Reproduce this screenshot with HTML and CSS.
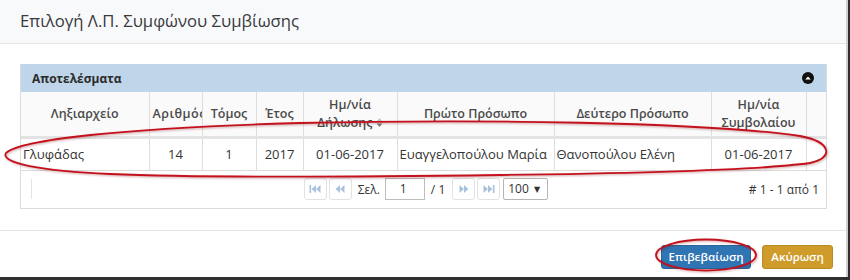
FILE: index.html
```html
<!DOCTYPE html>
<html lang="el">
<head>
    <meta charset="UTF-8">
    <title>Επιλογή Λ.Π. Συμφώνου Συμβίωσης</title>
    <link rel="stylesheet" href="styles.css">
</head>
<body>
    <div class="modal">
        <div class="modal-header">
            <h4>Επιλογή Λ.Π. Συμφώνου Συμβίωσης</h4>
        </div>

        <div class="modal-body">
            <div class="panel">
                <div class="panel-heading">
                    <span>Αποτελέσματα</span>
                    <span class="collapse-btn">
                        <svg viewBox="0 0 12 12" width="12" height="12">
                            <circle cx="6" cy="6" r="6" fill="#111"/>
                            <path d="M3.2 7.4 L6 4.4 L8.8 7.4 Z" fill="#fff"/>
                        </svg>
                    </span>
                </div>

                <div class="grid">
                    <table>
                        <colgroup>
                            <col style="width:128px">
                            <col style="width:53px">
                            <col style="width:54px">
                            <col style="width:47px">
                            <col style="width:94px">
                            <col style="width:157px">
                            <col style="width:157px">
                            <col style="width:95px">
                            <col>
                        </colgroup>
                        <thead>
                            <tr>
                                <th>Ληξιαρχείο</th>
                                <th><div class="clip">Αριθμός</div></th>
                                <th>Τόμος</th>
                                <th>Έτος</th>
                                <th>Ημ/νία<br>Δήλωσης <svg class="sort" viewBox="0 0 7 11" width="7" height="11"><path d="M0.5 4.5 L3.5 1 L6.5 4.5 Z" fill="#c4c4c4"/><path d="M0.5 6.5 L3.5 10 L6.5 6.5 Z" fill="#7d7d7d"/></svg></th>
                                <th>Πρώτο Πρόσωπο</th>
                                <th>Δεύτερο Πρόσωπο</th>
                                <th>Ημ/νία<br>Συμβολαίου</th>
                                <th class="gutter"></th>
                            </tr>
                        </thead>
                        <tbody>
                            <tr>
                                <td class="left">Γλυφάδας</td>
                                <td>14</td>
                                <td>1</td>
                                <td>2017</td>
                                <td>01-06-2017</td>
                                <td class="left">Ευαγγελοπούλου Μαρία</td>
                                <td class="left">Θανοπούλου Ελένη</td>
                                <td>01-06-2017</td>
                                <td class="gutter"></td>
                            </tr>
                        </tbody>
                    </table>
                </div>

                <div class="pager">
                    <div class="pager-left"><span class="sep"></span></div>
                    <div class="pager-center">
                        <span class="pg-btn">
                            <svg viewBox="0 0 12 10" width="12" height="10"><rect x="0.5" y="1" width="1.6" height="8" fill="#a9c2dc"/><path d="M7 1 L2.6 5 L7 9 Z M11.5 1 L7.1 5 L11.5 9 Z" fill="#a9c2dc"/></svg>
                        </span>
                        <span class="pg-btn">
                            <svg viewBox="0 0 10 10" width="10" height="10"><path d="M5 1 L0.6 5 L5 9 Z M9.5 1 L5.1 5 L9.5 9 Z" fill="#a9c2dc"/></svg>
                        </span>
                        <span class="pg-label">Σελ.</span>
                        <span class="pg-input">1</span>
                        <span class="pg-total">/ 1</span>
                        <span class="pg-btn">
                            <svg viewBox="0 0 10 10" width="10" height="10"><path d="M0.5 1 L4.9 5 L0.5 9 Z M5 1 L9.4 5 L5 9 Z" fill="#a9c2dc"/></svg>
                        </span>
                        <span class="pg-btn">
                            <svg viewBox="0 0 12 10" width="12" height="10"><path d="M0.5 1 L4.9 5 L0.5 9 Z M5 1 L9.4 5 L5 9 Z" fill="#a9c2dc"/><rect x="9.9" y="1" width="1.6" height="8" fill="#a9c2dc"/></svg>
                        </span>
                        <span class="pg-select">100 <span class="caret">▼</span></span>
                    </div>
                    <div class="pager-right"># 1 - 1 από 1</div>
                </div>
            </div>
        </div>

        <div class="modal-footer">
            <button class="btn btn-primary">Επιβεβαίωση</button>
            <button class="btn btn-warning">Ακύρωση</button>
        </div>
    </div>

    <!-- hand-drawn highlight marks over the screenshot -->
    <svg class="marks" viewBox="0 0 850 280" width="850" height="280">
        <path d="M6,153 C 20,140 120,128 300,123 C 480,119 700,122 800,136 C 832,142 834,158 810,163 C 760,170 650,173 500,175 C 350,177 200,178 110,174 C 40,171 0,163 6,153 Z"/>
        <ellipse cx="706" cy="255" rx="50" ry="15.5"/>
    </svg>
</body>
</html>
```

FILE: styles.css
```css
* {
    margin: 0;
    padding: 0;
    box-sizing: border-box;
}

body {
    font-family: 'Open Sans', 'Noto Sans', 'DejaVu Sans', sans-serif;
    background: #2f2f2f;
    color: #333;
    width: 850px;
    height: 280px;
    overflow: hidden;
}

.modal {
    width: 848px;
    height: 277px;
    background: #fff;
    border-right: 2px solid #cfcfcf;
    display: flex;
    flex-direction: column;
}

.modal-header {
    height: 44px;
    background: #f8f9fb;
    border-bottom: 1px solid #e5e5e5;
    padding: 10px 20px 0;
}

.modal-header h4 {
    font-size: 16.7px;
    font-weight: 400;
    line-height: 22px;
    color: #3a3a3a;
}

.modal-body {
    padding: 20px 19px 21px 20px;
}

.panel {
    border: 1px solid #dcdcdc;
    border-top: none;
}

.panel-heading {
    height: 28px;
    background: #bfd5e9;
    display: flex;
    align-items: center;
    justify-content: space-between;
    padding: 0 12px 0 11px;
    font-size: 12px;
    font-weight: 700;
    color: #2b2b2b;
}

.collapse-btn {
    display: flex;
}

.grid table {
    width: 100%;
    border-collapse: collapse;
    table-layout: fixed;
}

.grid th {
    height: 45px;
    background: #fafafa;
    border-right: 1px solid #dedede;
    border-bottom: 3px solid #e3e3e3;
    font-size: 12.5px;
    font-weight: 600;
    line-height: 18px;
    color: #4a4a4a;
    text-align: center;
    vertical-align: middle;
    overflow: hidden;
    white-space: nowrap;
}

.grid th.gutter {
    border-right: none;
}

.clip {
    overflow: hidden;
    white-space: nowrap;
    padding-left: 3px;
    letter-spacing: 0.5px;
    text-align: left;
}

.sort {
    vertical-align: -1px;
}

.grid td {
    height: 33px;
    border-right: 1px solid #dedede;
    border-bottom: 1px solid #dcdcdc;
    font-size: 13px;
    color: #333;
    text-align: center;
    white-space: nowrap;
    overflow: hidden;
}

.grid td.left {
    text-align: left;
    padding-left: 2px;
}

.grid td.gutter {
    border-right: none;
}

.pager {
    height: 37px;
    display: grid;
    grid-template-columns: 1fr auto 1fr;
    align-items: center;
    font-size: 12px;
    color: #333;
}

.pager-left {
    padding-left: 10px;
}

.sep {
    display: block;
    width: 1px;
    height: 20px;
    background: #e4e4e4;
}

.pager-center {
    display: flex;
    align-items: center;
    gap: 2px;
    padding-left: 5px;
}

.pg-btn {
    width: 23px;
    height: 22px;
    border: 1px solid #e2e2e2;
    border-radius: 3px;
    display: flex;
    align-items: center;
    justify-content: center;
}

.pg-label {
    margin: 0 3px 0 4px;
}

.pg-input {
    width: 40px;
    height: 22px;
    border: 1px solid #bdbdbd;
    padding-left: 14px;
    line-height: 20px;
    font-size: 12px;
}

.pg-total {
    margin: 0 5px 0 4px;
}

.pg-select {
    width: 45px;
    height: 22px;
    border: 1px solid #b5b5b5;
    border-radius: 2px;
    padding-left: 4px;
    line-height: 20px;
    margin-left: 1px;
}

.caret {
    font-size: 8px;
    vertical-align: 1px;
    margin-left: 2px;
}

.pager-right {
    text-align: right;
    padding-right: 7px;
}

.modal-footer {
    flex: 1;
    border-top: 1px solid #e5e5e5;
    display: flex;
    justify-content: flex-end;
    align-items: flex-start;
    gap: 11px;
    padding: 14px 13px 0 0;
}

.btn {
    height: 24px;
    border-radius: 3px;
    font-family: inherit;
    font-size: 11.5px;
    font-weight: 600;
    color: #fff;
    padding: 0;
}

.btn-primary {
    width: 90px;
    background: #3075b3;
    border: 1px solid #2a649a;
}

.btn-warning {
    width: 71px;
    background: #cf9c2c;
    border: 1px solid #b98a22;
}

.marks {
    position: absolute;
    top: 0;
    left: 0;
    pointer-events: none;
}

.marks path,
.marks ellipse {
    fill: none;
    stroke: #c3111d;
    stroke-width: 1.8;
    filter: drop-shadow(1px 1px 1px rgba(120, 0, 0, 0.35));
}
```
